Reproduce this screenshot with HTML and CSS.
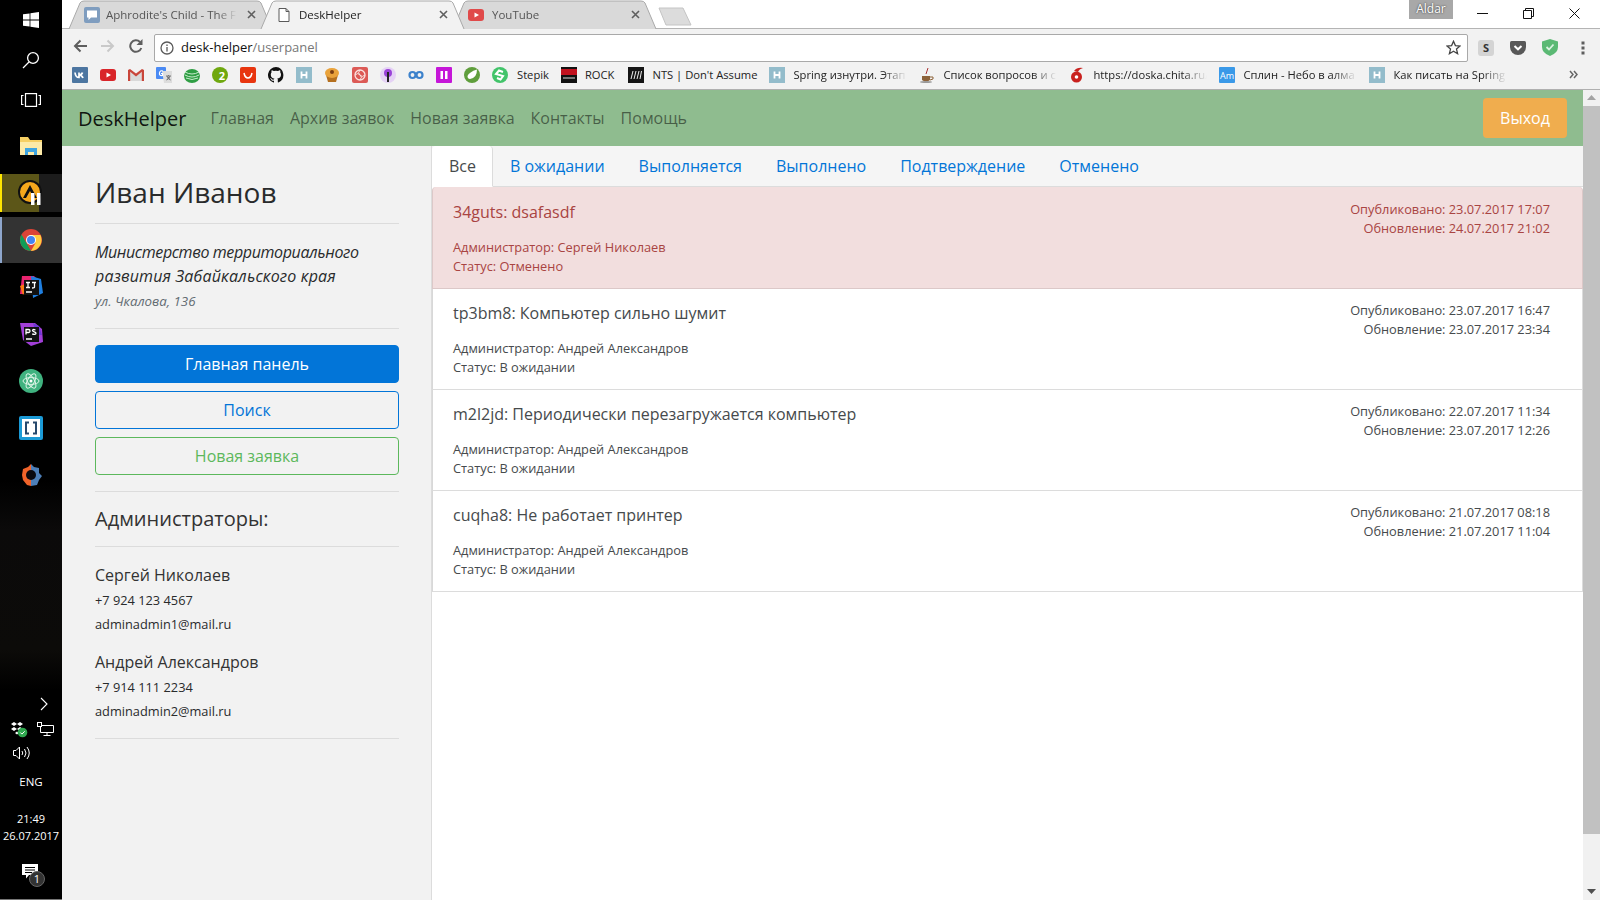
FILE: index.html

```html
<!DOCTYPE html>
<html lang="ru">
<head>
<meta charset="utf-8">
<title>DeskHelper</title>
<link rel="stylesheet" href="styles.css">
</head>
<body>

<!-- панель задач -->
<aside class="taskbar">
<div class="task-top">
<svg width="16" height="16" viewBox="0 0 16 16"><path fill="#fff" d="M0 2.3 6.6 1.4V7.6H0ZM7.4 1.3 16 0V7.6H7.4ZM0 8.4H6.6V14.6L0 13.7ZM7.4 8.4H16V16L7.4 14.7Z"/></svg>
</div>
<div class="task-top">
<svg width="18" height="18" viewBox="0 0 18 18" fill="none" stroke="#fff" stroke-width="1.3"><circle cx="11" cy="7" r="5.4"/><path d="M7 11 1 17"/></svg>
</div>
<div class="task-top">
<svg width="20" height="14" viewBox="0 0 20 14" fill="none" stroke="#fff" stroke-width="1.2"><rect x="4.5" y=".6" width="11" height="12.8"/><path d="M2.5 2.5H.6V11.5H2.5M17.500 2.500H19.400V11.500H17.500"/></svg>
</div>
<div class="task-app first-app">
<svg width="24" height="22" viewBox="0 0 24 22"><path fill="#f6cf63" d="M1 2h8l2 3h12v15H1Z"/><path fill="#fdeaa8" d="M1 7h22v13H1Z"/><path fill="#3fa4e0" d="M6 20v-7h12v7h-3v-3H9v3Z"/></svg>
</div>
<div class="task-app app-playing">
<svg width="26" height="26" viewBox="0 0 26 26"><circle cx="12" cy="12" r="11" fill="#f5a81c" stroke="#111" stroke-width="2"/><path d="M12 5 5 18h3l4-7 4 7h3Z" fill="#111"/><path fill="#fff" d="M13 13h3.500v12H13ZM19 13h3.500v12H19Z"/></svg>
</div>
<div class="task-app app-active">
<svg width="22" height="22" viewBox="0 0 22 22"><circle cx="11" cy="11" r="11" fill="#db4437"/><path fill="#0f9d58" d="M11 22A11 11 0 0 1 1.500 5.500L7 15l4 7Z"/><path fill="#ffcd40" d="M11 6h9.400A11 11 0 0 1 11 22l4.500-8Z"/><circle cx="11" cy="11" r="5" fill="#fff"/><circle cx="11" cy="11" r="4" fill="#4285f4"/></svg>
</div>
<div class="task-app">
<svg width="24" height="24" viewBox="0 0 24 24"><path fill="#e8246f" d="M3 1h12l4 4-12 14H1Z"/><path fill="#1f7fe0" d="M12 1l10 3 2 14-10 5Z"/><path fill="#f97a12" d="M1 11l5-2v8l-2 3Z"/><rect x="5" y="5" width="15" height="15" fill="#111"/><path stroke="#fff" stroke-width="1.300" fill="none" d="M7 7.500h4M9 7.500v5M7 12.500h4M13 7.500h4M15.500 7.500v4.500q0 1-2.500 1M7 17h6"/></svg>
</div>
<div class="task-app">
<svg width="24" height="24" viewBox="0 0 24 24"><path fill="#a23fd8" d="M1 1l15 0 7 6 1 13-12 4-8-6Z"/><path fill="#6d39d4" d="M14 1l6 3 3 9-6 0Z"/><rect x="5" y="5" width="15" height="15" fill="#111"/><path stroke="#fff" stroke-width="1.300" fill="none" d="M7 12.500V7.500h2.500a1.300 1.300 0 0 1 0 3H7M16.500 8q-3-1.200-3 .6c0 1.500 3.500 1 3.500 2.600 0 1.500-2.500 1.300-3.800.7M7 17h6"/></svg>
</div>
<div class="task-app">
<svg width="24" height="24" viewBox="0 0 24 24"><circle cx="12" cy="12" r="12" fill="#3fb27f"/><g fill="none" stroke="#dff5e8" stroke-width="1"><ellipse cx="12" cy="12" rx="8" ry="3.400"/><ellipse cx="12" cy="12" rx="8" ry="3.400" transform="rotate(60 12 12)"/><ellipse cx="12" cy="12" rx="8" ry="3.400" transform="rotate(120 12 12)"/></g><circle cx="12" cy="12" r="1.500" fill="#fff"/></svg>
</div>
<div class="task-app">
<svg width="24" height="24" viewBox="0 0 24 24"><rect width="24" height="24" rx="2" fill="#1b9ad6"/><rect x="3" y="3" width="18" height="18" fill="#fff"/><path fill="none" stroke="#27496d" stroke-width="2" d="M10 6.500H7v11h3M14 6.500h3v11h-3"/></svg>
</div>
<div class="task-app">
<svg width="22" height="24" viewBox="0 0 22 24"><path fill="#4d7fb8" d="M11 1l3 3 5 1 0 5 3 3-3 4-2 5-6 1Z"/><path fill="#f0632a" d="M11 1 8 4 3 6 2 12l1 5 4 5 4 1Z"/><circle cx="11" cy="12" r="5" fill="#0a0a10"/></svg>
</div>

<div class="tray">
<svg class="tray-arrow" width="9" height="14" viewBox="0 0 9 14" fill="none" stroke="#fff" stroke-width="1.100"><path d="M1 1l6 6-6 6"/></svg>
<div class="tray-row">
<svg width="17" height="17" viewBox="0 0 17 17"><path fill="#fff" d="M3 1l3 2-3 2-3-2ZM9 1l3 2-3 2-3-2ZM3 6l3 2-3 2-3-2ZM9 6l3 2-3 2-3-2ZM6 10.500l2 1.500-2 1.500-2-1.500Z"/><circle cx="11.500" cy="11.500" r="4.800" fill="#2fa84f"/><path d="M9.300 11.500l1.600 1.600 2.800-2.800" stroke="#fff" fill="none"/></svg>
<svg width="17" height="14" viewBox="0 0 17 14" fill="none" stroke="#fff" stroke-width="1"><path d="M3.500 3.500H16.500V10.500H3.500ZM10 10.500V13M6.500 13.500H13.500"/><rect x=".5" y=".5" width="4" height="4" fill="#000"/></svg>
</div>
<div class="tray-row tray-sound">
<svg width="17" height="14" viewBox="0 0 17 14" fill="none" stroke="#fff" stroke-width="1"><path d="M.5 4.500H3L6.500 1V13L3 9.500H.5ZM9 5q1.500 2 0 4M11.500 3q3 4 0 8M14 1q4.500 6 0 12"/></svg>
</div>
<div class="tray-lang">ENG</div>
<div class="tray-clock">21:49<br>26.07.2017</div>
<div class="tray-notes">
<svg width="16" height="15" viewBox="0 0 16 15"><path fill="#fff" d="M0 0H16V11H7L4 14.500V11H0Z"/><path stroke="#000" d="M3 3.500H13M3 6H13M3 8.500H10"/></svg>
<span class="notes-count">1</span>
</div>
</div>
</aside>

<div class="browser">
<!-- вкладки -->
<div class="tabstrip">
<div class="btab">
<svg class="btab-shape" viewBox="0 0 205 29" preserveAspectRatio="none"><path fill="#d9d9d9" stroke="#a9a9a9" d="M1 29 12 3Q13 1 16 1H189Q192 1 193 3L204 29"/></svg>
<svg class="fav" width="16" height="16" viewBox="0 0 16 16"><rect width="16" height="16" rx="2" fill="#7f9dbf"/><path fill="#fff" d="M3 3.500H13V10.500H7L4.500 13V10.500H3Z"/></svg>
<span class="btab-title">Aphrodite's Child - The F</span>
<svg class="btab-close" width="9" height="9" viewBox="0 0 9 9" stroke="#5f5f5f" stroke-width="1.600"><path d="M1 1l7 7M8 1 1 8"/></svg>
</div>
<div class="btab btab-active">
<svg class="btab-shape" viewBox="0 0 205 29" preserveAspectRatio="none"><path fill="#f2f2f2" stroke="#a9a9a9" d="M1 29 12 3Q13 1 16 1H189Q192 1 193 3L204 29"/></svg>
<svg class="fav" width="16" height="16" viewBox="0 0 16 16" fill="#fff" stroke="#5a5a5a"><path d="M3 1.500H10L13 4.500V14.500H3ZM10 1.500V4.500H13"/></svg>
<span class="btab-title">DeskHelper</span>
<svg class="btab-close" width="9" height="9" viewBox="0 0 9 9" stroke="#5f5f5f" stroke-width="1.600"><path d="M1 1l7 7M8 1 1 8"/></svg>
</div>
<div class="btab btab-last">
<svg class="btab-shape" viewBox="0 0 205 29" preserveAspectRatio="none"><path fill="#d9d9d9" stroke="#a9a9a9" d="M1 29 12 3Q13 1 16 1H189Q192 1 193 3L204 29"/></svg>
<svg class="fav" width="16" height="16" viewBox="0 0 16 16"><rect y="2" width="16" height="12" rx="3" fill="#e04a4a"/><path fill="#fff" d="M6.500 5.500 11 8 6.500 10.500Z"/></svg>
<span class="btab-title">YouTube</span>
<svg class="btab-close" width="9" height="9" viewBox="0 0 9 9" stroke="#5f5f5f" stroke-width="1.600"><path d="M1 1l7 7M8 1 1 8"/></svg>
</div>
<svg class="newtab" width="34" height="19" viewBox="0 0 34 19"><path fill="#dcdcdc" stroke="#c4c4c4" d="M1 1H25L33 18H8Z" stroke-linejoin="round"/></svg>
<div class="strip-fill"></div>
<div class="user-badge">Aldar</div>
<div class="win-btns">
<svg width="11" height="11" viewBox="0 0 11 11" stroke="#111" fill="none"><path d="M0 5.500H11"/></svg>
<svg width="11" height="11" viewBox="0 0 11 11" stroke="#111" fill="none"><path d="M.5 2.500H8.500V10.500H.5ZM2.500 2.500V.5H10.500V8.500H8.500"/></svg>
<svg width="11" height="11" viewBox="0 0 11 11" stroke="#111" fill="none"><path d="M.5.5l10 10M10.500.5l-10 10"/></svg>
</div>
</div>

<!-- адресная строка -->
<div class="toolbar">
<div class="nav-btns">
<svg width="14" height="14" viewBox="0 0 14 14" fill="none" stroke="#5e5e5e" stroke-width="2"><path d="M14 7H2M7.500 1.500 2 7l5.500 5.500"/></svg>
<svg width="14" height="14" viewBox="0 0 14 14" fill="none" stroke="#c9c9c9" stroke-width="2"><path d="M0 7H12M6.500 1.500 12 7l-5.500 5.500"/></svg>
<svg width="14" height="14" viewBox="0 0 14 14" fill="none" stroke="#5e5e5e" stroke-width="2"><path d="M12.300 9A5.700 5.700 0 1 1 11 3"/><path fill="#5e5e5e" stroke="none" d="M13.500 0V6H7.500Z"/></svg>
</div>
<div class="omnibox">
<svg width="14" height="14" viewBox="0 0 14 14" fill="none" stroke="#5a5a5a" stroke-width="1.300"><circle cx="7" cy="7" r="6"/><path d="M7 6v4.500M7 3.500v1.500"/></svg>
<div class="url"><span class="url-host">desk-helper</span>/userpanel</div>
<svg width="15" height="15" viewBox="0 0 15 15" fill="none" stroke="#444" stroke-width="1.300"><path d="M7.500 1.300 9.400 5.600 14 6 10.500 9.100 11.600 13.700 7.500 11.300 3.400 13.700 4.500 9.100 1 6 5.600 5.600Z"/></svg>
</div>
<div class="ext-btns">
<svg width="16" height="16" viewBox="0 0 16 16"><rect width="16" height="16" rx="3" fill="#d4d4d4"/><text x="8" y="12" text-anchor="middle" class="ext-s">S</text></svg>
<svg width="16" height="14" viewBox="0 0 16 14"><path fill="#585858" d="M1.500 0H14.500Q16 0 16 1.500V6A8 8 0 0 1 0 6V1.500Q0 0 1.500 0Z"/><path fill="none" stroke="#fff" stroke-width="2" d="M4.500 5 8 8.300 11.500 5"/></svg>
<svg width="16" height="17" viewBox="0 0 16 17"><path fill="#5bb974" d="M8 0 16 2.500V8Q16 14 8 17 0 14 0 8V2.500Z"/><path fill="none" stroke="#d9f2e0" stroke-width="1.800" d="M4.500 8 7 10.500 11.500 5.500"/></svg>
<svg width="4" height="14" viewBox="0 0 4 14"><path fill="#5e5e5e" d="M.5.500h3v3h-3ZM.5 5.500h3v3h-3ZM.5 10.500h3v3h-3Z"/></svg>
</div>
</div>

<!-- закладки -->
<div class="bookmarks">
<svg class="fav" viewBox="0 0 16 16"><rect width="16" height="16" rx="1" fill="#4d76a1"/><path fill="none" stroke="#fff" stroke-width="1.700" d="M3 5.500q.5 5 4 5V5.500M7 8q3-.2 3.500-2.500M7 8q3 .2 4 3"/></svg>
<svg class="fav" viewBox="0 0 16 16"><rect y="2" width="16" height="12" rx="3" fill="#d9252a"/><path fill="#fff" d="M6.500 5.500 11 8 6.500 10.500Z"/></svg>
<svg class="fav" viewBox="0 0 16 16"><path fill="#c9453a" d="M0 3H2.500V14H0ZM13.500 3H16V14H13.500Z"/><path fill="#d9d9d9" d="M2.500 4 8 8.500 13.500 4V14H2.500Z"/><path fill="#c9453a" d="M0 3 8 9.500 16 3 14 2 8 6.500 2 2Z"/></svg>
<svg class="fav" viewBox="0 0 16 16"><rect width="10" height="12" rx="1" fill="#4a8af4"/><path fill="#ddd" d="M6 4H16V16H8Z"/><path fill="none" stroke="#fff" stroke-width="1.200" d="M7 4q-3-1-3.500 2t3 2.500V6.500H5"/><path stroke="#777" d="M10 9h5M12.500 8v1M11 9q1 3 3.500 4M14 9q-1 3-3.500 4"/></svg>
<svg class="fav" viewBox="0 0 16 16"><ellipse cx="8" cy="9" rx="8" ry="7" fill="#2f9e44"/><path fill="none" stroke="#c8eccc" d="M1 5q7 4 14 0M1 8q7 4 14 0M2 11q6 3 12 0"/></svg>
<svg class="fav" viewBox="0 0 16 16"><circle cx="8" cy="8" r="8" fill="#6fa80f"/><text x="10" y="12.500" text-anchor="middle" class="fav-two">2</text></svg>
<svg class="fav" viewBox="0 0 16 16"><rect width="16" height="16" rx="2" fill="#e8350f"/><path fill="none" stroke="#fff" stroke-width="1.500" d="M4 6q1 5 4 5t4-5"/></svg>
<svg class="fav" viewBox="0 0 16 16"><path fill="#111" d="M8 0a8 8 0 0 0-2.500 15.600c.4 0 .5-.2.500-.4v-1.500c-2.200.5-2.700-1-2.700-1-.4-.9-.9-1.200-.9-1.200-.7-.5 0-.5 0-.5.800.1 1.200.8 1.200.8.700 1.200 1.900.9 2.300.7.100-.5.300-.9.500-1.100-1.800-.2-3.600-.9-3.600-4 0-.9.300-1.600.8-2.100-.1-.2-.4-1 .1-2.100 0 0 .7-.2 2.200.8a7.600 7.600 0 0 1 4 0c1.500-1 2.200-.8 2.200-.8.400 1.100.2 1.900.1 2.100.5.600.8 1.300.8 2.100 0 3.100-1.900 3.700-3.700 3.900.3.300.5.700.5 1.500v2.200c0 .2.100.5.500.4A8 8 0 0 0 8 0Z"/></svg>
<svg class="fav" viewBox="0 0 16 16"><rect width="16" height="16" fill="#93bccb"/><path stroke="#fff" stroke-width="1.800" d="M5.500 4.500V11.500M10.500 4.500V11.500M5.500 8H10.500"/></svg>
<svg class="fav" viewBox="0 0 16 16"><path fill="#b5701f" d="M2 8H14L12 15H4Z"/><ellipse cx="8" cy="6" rx="7" ry="5" fill="#e9a23b"/><circle cx="8" cy="5" r="2" fill="#7a3d12"/></svg>
<svg class="fav" viewBox="0 0 16 16"><rect width="16" height="16" rx="2" fill="#dc5a56"/><circle cx="8" cy="8" r="5" fill="none" stroke="#fbe3e0" stroke-width="1.300"/><path fill="none" stroke="#fbe3e0" d="M3 8q3-3 5 0t5 0M8 3q-3 3 0 5t0 5"/></svg>
<svg class="fav" viewBox="0 0 16 16"><circle cx="8" cy="8" r="8" fill="#e5d2f5"/><circle cx="8" cy="6" r="4" fill="#9a43d8"/><path stroke="#222" stroke-width="2" d="M8 5V15"/></svg>
<svg class="fav" viewBox="0 0 16 16" fill="none" stroke="#3d82cc" stroke-width="2.200"><circle cx="4.500" cy="8" r="3"/><circle cx="11.500" cy="8" r="3"/></svg>
<svg class="fav" viewBox="0 0 16 16"><rect width="16" height="16" rx="1" fill="#c516d8"/><path fill="#fff" d="M4.500 4H7V12H4.500ZM9 4H11.500V12H9Z"/></svg>
<svg class="fav" viewBox="0 0 16 16"><circle cx="8" cy="8" r="8" fill="#5f9e3c"/><path fill="#fff" d="M13 2.500Q13 11 6 12 3.500 12 3.500 9 5 5 13 2.500Z"/></svg>
<svg class="fav" viewBox="0 0 16 16"><circle cx="8" cy="8" r="8" fill="#42c46a"/><path fill="none" stroke="#fff" stroke-width="2" d="M11 5 7 3.500 4 7 11 9 8.500 12.500 5 11"/></svg>
<div class="bm bm-first"><span class="bm-text">Stepik</span></div>
<div class="bm"><svg class="fav" viewBox="0 0 16 16"><rect width="16" height="16" fill="#111"/><rect y="2" width="16" height="6" fill="#c1121f"/><path stroke="#ddd" d="M2 11H14"/></svg><span class="bm-text">ROCK</span></div>
<div class="bm bm-nts"><svg class="fav" viewBox="0 0 16 16"><rect width="16" height="16" fill="#151515"/><path stroke="#eee" d="M3 12 5 4M6 12 8 4M9 12 11 4M12 12 13.500 4"/></svg><span class="bm-text">NTS | Don't Assume</span></div>
<div class="bm"><svg class="fav" viewBox="0 0 16 16"><rect width="16" height="16" fill="#93bccb"/><path stroke="#fff" stroke-width="1.800" d="M5.500 4.500V11.500M10.500 4.500V11.500M5.500 8H10.500"/></svg><span class="bm-text bm-fade">Spring изнутри. Этап</span></div>
<div class="bm"><svg class="fav" viewBox="0 0 16 16"><path fill="#8c6239" d="M3 9H11V13Q7 16 3 13Z"/><path fill="none" stroke="#8c6239" d="M11 10H14V12L11 13"/><path stroke="#a33" d="M7 7 9 1"/><ellipse cx="7" cy="15" rx="6" ry="1" fill="#999"/></svg><span class="bm-text bm-fade">Список вопросов и с</span></div>
<div class="bm"><svg class="fav" viewBox="0 0 16 16"><circle cx="7.500" cy="10" r="5.500" fill="#c9211e"/><circle cx="7.500" cy="10" r="1.800" fill="#fff"/><path fill="#c9211e" d="M5 4Q8 0 14 1 10 2 9 5Z"/></svg><span class="bm-text bm-fade">https://doska.chita.ru/</span></div>
<div class="bm"><svg class="fav" viewBox="0 0 16 16"><rect width="16" height="16" rx="1" fill="#3a99e8"/><text x="8" y="12" text-anchor="middle" class="fav-am">Am</text></svg><span class="bm-text bm-fade">Сплин - Небо в алма</span></div>
<div class="bm"><svg class="fav" viewBox="0 0 16 16"><rect width="16" height="16" fill="#93bccb"/><path stroke="#fff" stroke-width="1.800" d="M5.500 4.500V11.500M10.500 4.500V11.500M5.500 8H10.500"/></svg><span class="bm-text bm-fade">Как писать на Spring</span></div>
<svg class="bm-more" width="9" height="9" viewBox="0 0 9 9" fill="none" stroke="#666" stroke-width="1.500"><path d="M1 1l3 3.500-3 3.500M5 1l3 3.500-3 3.500"/></svg>
</div>

<div class="viewport">
<div class="page">
<nav class="navbar">
<a class="navbar-brand">DeskHelper</a>
<a class="nav-link">Главная</a>
<a class="nav-link">Архив заявок</a>
<a class="nav-link">Новая заявка</a>
<a class="nav-link">Контакты</a>
<a class="nav-link">Помощь</a>
<button class="logout-btn">Выход</button>
</nav>

<div class="page-body">
<!-- профиль -->
<div class="sidebar">
<h1 class="user-name">Иван Иванов</h1>
<hr class="hr-name">
<p class="org-name"><span class="org-line1">Министерство территориального</span> <span class="org-line2">развития Забайкальского края</span></p>
<p class="org-address">ул. Чкалова, 136</p>
<hr class="hr-org">
<button class="side-btn btn-primary">Главная панель</button>
<button class="side-btn btn-outline">Поиск</button>
<button class="side-btn btn-success">Новая заявка</button>
<hr class="hr-btns">
<h2 class="admins-title">Администраторы:</h2>
<hr class="hr-admins">
<div class="admin">
<h3 class="admin-name">Сергей Николаев</h3>
<p class="admin-line">+7 924 123 4567</p>
<p class="admin-line">adminadmin1@mail.ru</p>
</div>
<div class="admin">
<h3 class="admin-name">Андрей Александров</h3>
<p class="admin-line">+7 914 111 2234</p>
<p class="admin-line">adminadmin2@mail.ru</p>
</div>
<hr class="hr-end">
</div>

<!-- заявки -->
<div class="content">
<div class="nav-tabs">
<a class="tab tab-active">Все</a>
<a class="tab">В ожидании</a>
<a class="tab">Выполняется</a>
<a class="tab">Выполнено</a>
<a class="tab">Подтверждение</a>
<a class="tab">Отменено</a>
</div>
<div class="list-group">
<div class="list-item item-danger">
<div class="item-main">
<h5 class="item-title">34guts: dsafasdf</h5>
<p>Администратор: Сергей Николаев</p>
<p>Статус: Отменено</p>
</div>
<div class="item-dates">
<p>Опубликовано: 23.07.2017 17:07</p>
<p>Обновление: 24.07.2017 21:02</p>
</div>
</div>
<div class="list-item">
<div class="item-main">
<h5 class="item-title">tp3bm8: Компьютер сильно шумит</h5>
<p>Администратор: Андрей Александров</p>
<p>Статус: В ожидании</p>
</div>
<div class="item-dates">
<p>Опубликовано: 23.07.2017 16:47</p>
<p>Обновление: 23.07.2017 23:34</p>
</div>
</div>
<div class="list-item">
<div class="item-main">
<h5 class="item-title">m2l2jd: Периодически перезагружается компьютер</h5>
<p>Администратор: Андрей Александров</p>
<p>Статус: В ожидании</p>
</div>
<div class="item-dates">
<p>Опубликовано: 22.07.2017 11:34</p>
<p>Обновление: 23.07.2017 12:26</p>
</div>
</div>
<div class="list-item">
<div class="item-main">
<h5 class="item-title">cuqha8: Не работает принтер</h5>
<p>Администратор: Андрей Александров</p>
<p>Статус: В ожидании</p>
</div>
<div class="item-dates">
<p>Опубликовано: 21.07.2017 08:18</p>
<p>Обновление: 21.07.2017 11:04</p>
</div>
</div>
</div>
</div>
</div>
</div>

<!-- полоса прокрутки -->
<div class="scrollbar">
<svg width="9" height="5" viewBox="0 0 9 5"><path fill="#a3a3a3" d="M4.500 0 9 5H0Z"/></svg>
<div class="scroll-thumb"></div>
<svg width="9" height="5" viewBox="0 0 9 5"><path fill="#505050" d="M0 0H9L4.500 5Z"/></svg>
</div>
</div>
</div>

</body>
</html>
```

FILE: styles.css

```css
:root {
--green: #8fbc8f;
--blue: #0275d8;
--line: #dcdcdc;
--text: #464a4c;
--chrome: #f2f2f2;
--chrome-line: #a9a9a9;
}

* {
margin: 0;
padding: 0;
box-sizing: border-box;
}

html, body {
height: 100%;
overflow: hidden;
}

body {
display: flex;
font-family: "Open Sans", "Noto Sans", sans-serif;
color: #292b2c;
background: #fff;
}

svg {
display: block;
flex: none;
}

/* панель задач */
.taskbar {
width: 62px;
height: 900px;
flex: none;
display: flex;
flex-direction: column;
background: linear-gradient(#000 0, #000 480px, #0b0a0a 530px, #0c0b09 650px, #000 690px);
color: #fff;
}

.task-top {
height: 40px;
flex: none;
display: flex;
align-items: center;
justify-content: center;
}

.task-app {
height: 47px;
flex: none;
display: flex;
align-items: center;
justify-content: center;
}

.first-app {
margin-top: 2px;
}

.app-playing {
height: 38px;
margin: 5px 0;
box-shadow: inset 2px 0 0 #ffe600;
background: linear-gradient(90deg, #5c5618 0, #5c5618 39px, #1c1c1c 39px);
}

.app-active {
height: 46px;
box-shadow: inset 2px 0 0 #8ea6cc;
background: #333;
}

.tray {
margin-top: auto;
display: flex;
flex-direction: column;
align-items: center;
padding-bottom: 5px;
border-bottom: 1px solid #777;
}

.tray-arrow {
align-self: flex-end;
margin: 0 13px 6px 0;
}

.tray-row {
display: flex;
gap: 9px;
height: 24px;
align-items: center;
margin-left: 3px;
}

.tray-sound {
align-self: flex-start;
margin-left: 13px;
}

.tray-lang {
font-size: 11.500px;
line-height: 17px;
margin-top: 8px;
}

.tray-clock {
font-size: 11px;
line-height: 17px;
text-align: center;
margin-top: 20px;
white-space: nowrap;
}

.tray-notes {
position: relative;
margin: 20px 0 10px 6px;
width: 24px;
height: 20px;
}

.notes-count {
position: absolute;
left: 7px;
top: 7px;
width: 16px;
height: 16px;
border-radius: 50%;
background: #333;
border: 1px solid #666;
font-size: 11px;
line-height: 14px;
text-align: center;
}

/* окно браузера */
.browser {
flex: 1;
min-width: 0;
display: flex;
flex-direction: column;
height: 900px;
}

.tabstrip {
height: 29px;
flex: none;
display: flex;
padding-left: 6px;
border-bottom: 1px solid #b4b4b4;
}

.btab {
position: relative;
width: 205px;
height: 29px;
flex: none;
margin-right: -13px;
display: flex;
align-items: center;
padding: 0 17px 0 16px;
font-size: 11.500px;
color: #555;
}

.btab-active {
z-index: 2;
color: #222;
}

.btab-shape {
position: absolute;
left: 0;
top: 0;
width: 100%;
height: 100%;
}

.btab .fav {
position: relative;
}

.btab-title {
position: relative;
flex: 1;
margin-left: 6px;
overflow: hidden;
white-space: nowrap;
-webkit-mask-image: linear-gradient(90deg, #000 85%, transparent 100%);
}

.btab-active .btab-title {
margin-left: 7px;
}

.btab-last .btab-title {
margin-left: 8px;
}

.btab-close {
position: relative;
margin-left: 10px;
}

.newtab {
margin: 7px 0 0 14px;
}

.strip-fill {
flex: 1;
}

.user-badge {
width: 44px;
height: 19px;
background: #a8a8a8;
color: #fff;
font-size: 12px;
line-height: 17px;
text-align: center;
text-shadow: 0 0 2px #222;
}

.win-btns {
display: flex;
gap: 35px;
padding: 8px 20px 0 24px;
}

.toolbar {
height: 33px;
flex: none;
display: flex;
align-items: center;
background: var(--chrome);
padding-left: 11px;
}

.nav-btns {
display: flex;
gap: 14px;
}

.omnibox {
width: 1314px;
height: 28px;
margin-left: 11px;
margin-top: 4px;
display: flex;
align-items: center;
gap: 7px;
padding: 0 6px 0 5px;
background: #fff;
border: 1px solid var(--chrome-line);
border-radius: 2px;
}

.url {
flex: 1;
font-size: 13px;
color: #777;
padding-bottom: 2px;
}

.url-host {
color: #111;
}

.ext-btns {
display: flex;
align-items: center;
gap: 16px;
margin: 4px 0 0 10px;
}

.ext-btns svg:last-child {
margin-left: 7px;
}

.ext-s {
font-size: 11px;
font-weight: 700;
fill: #333;
}

.bookmarks {
height: 28px;
flex: none;
display: flex;
align-items: center;
gap: 12px;
padding: 0 0 2px 10px;
background: var(--chrome);
border-bottom: 1px solid #b0b0b0;
}

.fav {
width: 16px;
height: 16px;
}

.bm {
display: flex;
align-items: center;
gap: 8px;
font-size: 11.200px;
color: #222;
white-space: nowrap;
}

.bm-first {
margin-left: -3px;
}

.bm-nts {
margin-left: 2px;
}

.bm-fade {
display: block;
width: 114px;
overflow: hidden;
-webkit-mask-image: linear-gradient(90deg, #000 78%, transparent 100%);
}

.bm-more {
margin-left: 50px;
}

.fav-two {
font-size: 11px;
font-weight: 700;
fill: #fff;
}

.fav-am {
font-size: 9px;
fill: #fff;
}

.viewport {
flex: 1;
min-height: 0;
display: flex;
}

.page {
flex: 1;
min-width: 0;
display: flex;
flex-direction: column;
}

/* шапка */
.navbar {
height: 56px;
flex: none;
display: flex;
align-items: center;
padding: 0 16px;
background: var(--green);
}

.navbar-brand {
font-size: 20px;
color: rgba(0, 0, 0, 0.9);
margin-right: 16px;
}

.nav-link {
font-size: 16px;
color: rgba(0, 0, 0, 0.5);
padding: 0 8px;
}

.logout-btn {
margin-left: auto;
width: 84px;
height: 40px;
background: #f0ad4e;
color: #fff;
border: none;
border-radius: 4px;
font-family: inherit;
font-size: 16px;
}

.page-body {
flex: 1;
min-height: 0;
display: flex;
}

/* профиль */
.sidebar {
width: 370px;
flex: none;
padding: 31px 32px 0 33px;
background: var(--chrome);
border-right: 1px solid var(--line);
}

hr {
border: none;
border-top: 1px solid var(--line);
}

.hr-name {
margin: 15px 0 16px;
}

.user-name {
font-size: 28px;
font-weight: 400;
line-height: 31px;
}

.org-name {
font-size: 16px;
line-height: 24px;
font-style: italic;
}

.org-line1 {
letter-spacing: -0.38px;
white-space: nowrap;
}

.org-line2 {
letter-spacing: 0.18px;
white-space: nowrap;
}

.org-address {
font-size: 13.300px;
line-height: 19px;
font-style: italic;
color: #636c72;
margin-top: 4px;
}

.hr-org {
margin: 17px 0 16px;
}

.side-btn {
display: block;
width: 100%;
height: 38px;
margin-bottom: 8px;
border: 1px solid;
border-radius: 4px;
font-family: inherit;
font-size: 16px;
background: transparent;
}

.btn-primary {
background: var(--blue);
border-color: var(--blue);
color: #fff;
}

.btn-outline {
border-color: var(--blue);
color: var(--blue);
}

.btn-success {
border-color: #5cb85c;
color: #5cb85c;
margin-bottom: 0;
}

.hr-btns {
margin: 16px 0 15px;
}

.admins-title {
font-size: 20px;
font-weight: 400;
line-height: 24px;
color: #333;
}

.hr-admins {
margin: 15px 0 16px;
}

.admin {
margin-bottom: 14px;
}

.admin-name {
font-size: 16px;
font-weight: 400;
line-height: 24px;
color: #333;
margin-bottom: 1px;
}

.admin-line {
font-size: 12.800px;
line-height: 24px;
}

.hr-end {
margin-top: 15px;
}

/* заявки */
.content {
flex: 1;
min-width: 0;
background: #fff;
}

.nav-tabs {
height: 41px;
display: flex;
background: #f5f5f5;
border-bottom: 1px solid var(--line);
}

.tab {
height: 41px;
padding: 0 17px;
font-size: 16px;
line-height: 40px;
color: var(--blue);
}

.tab-active {
padding-right: 16px;
background: #fff;
color: var(--text);
border-right: 1px solid var(--line);
border-bottom: 1px solid #fff;
border-radius: 4px 4px 0 0;
}

.list-item {
height: 101px;
display: flex;
justify-content: space-between;
padding: 12px 32px 0 20px;
font-size: 12.800px;
line-height: 19.200px;
color: var(--text);
border: 1px solid var(--line);
border-top: none;
border-left-color: #d8d8d8;
}

.item-title {
font-size: 16px;
font-weight: 400;
line-height: 24px;
margin-bottom: 14px;
}

.item-danger {
height: 102px;
padding-top: 13px;
background: #f2dede;
color: #a94442;
border-color: #dcc8c8;
border-radius: 4px 4px 0 0;
}

.item-dates {
text-align: right;
}

/* полоса прокрутки */
.scrollbar {
width: 17px;
flex: none;
display: flex;
flex-direction: column;
align-items: center;
background: #f1f1f1;
padding-top: 5px;
}

.scroll-thumb {
flex: 1;
width: 17px;
margin-top: 6px;
background: #c1c1c1;
max-height: 728px;
}

.scrollbar svg:last-child {
margin-top: auto;
margin-bottom: 6px;
}
```
